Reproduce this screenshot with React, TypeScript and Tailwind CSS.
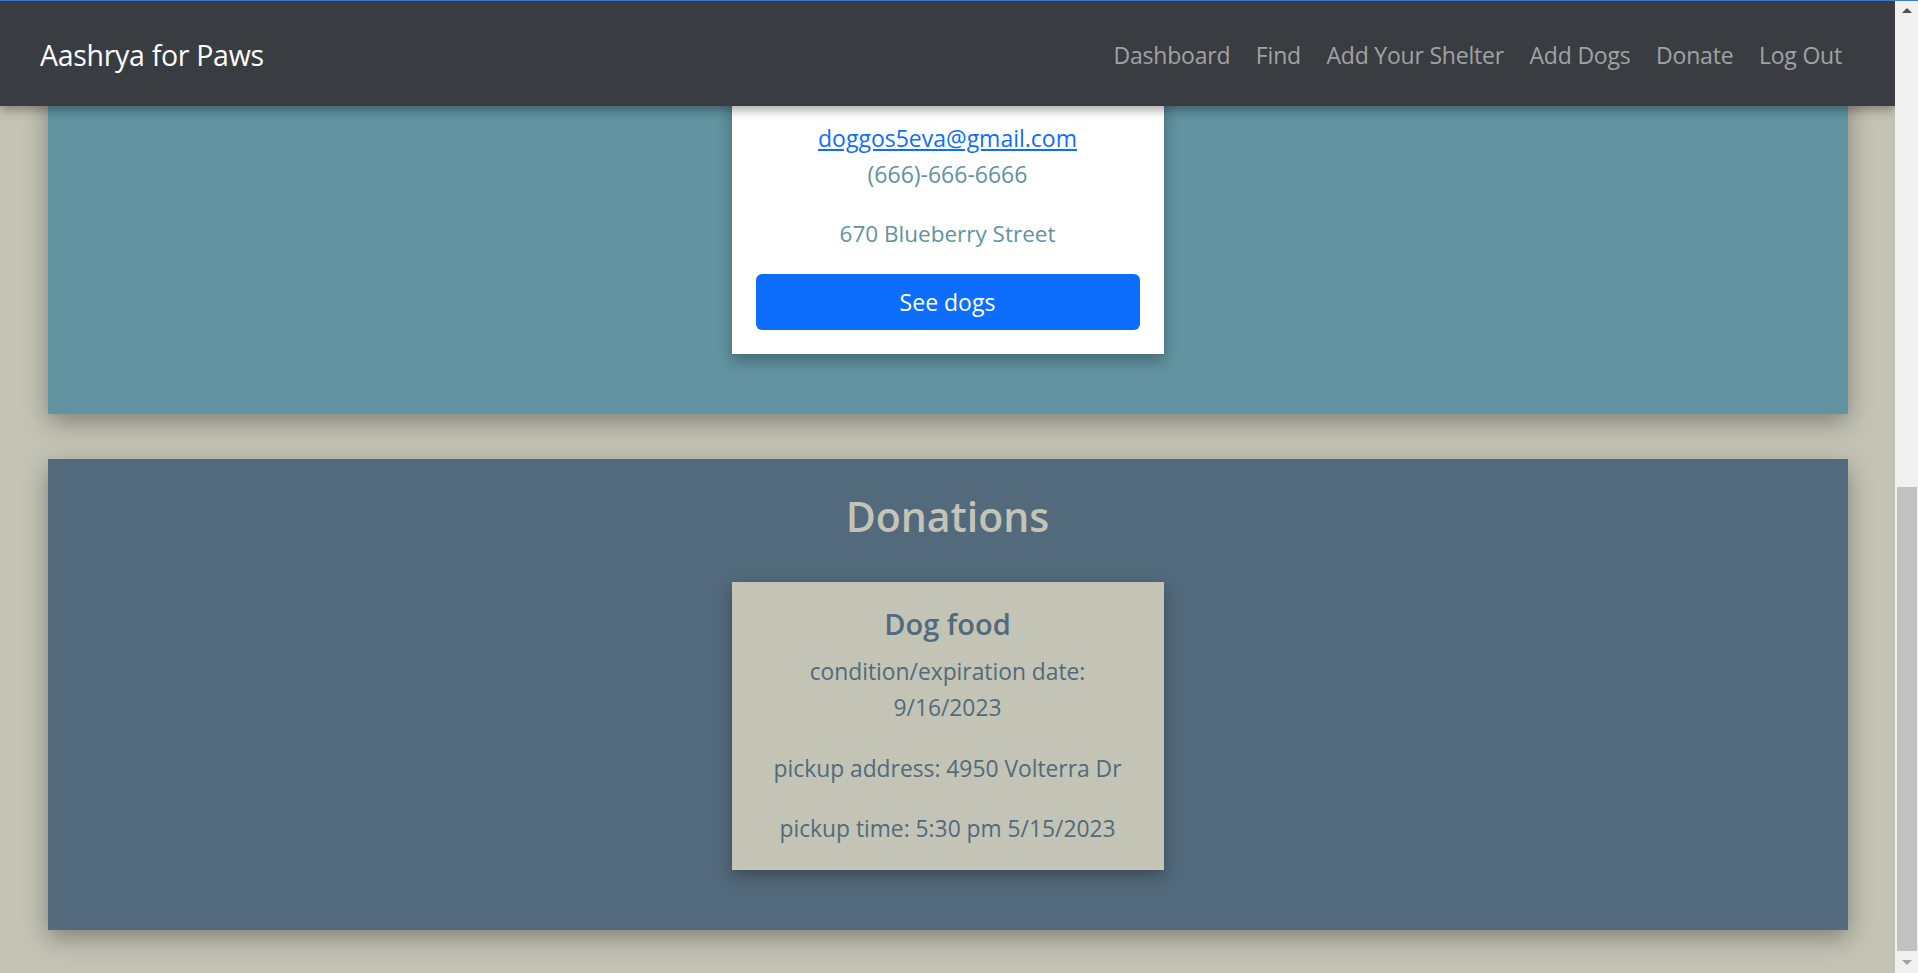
import React from "react";

const font = { fontFamily: '"Open Sans", "Noto Sans", sans-serif' };

function Scrollbar() {
  return (
    <div className="w-[23px] h-full bg-[#f0f0f0] flex flex-col items-center">
      <div className="h-[17px] w-full flex items-center justify-center pt-[4px]">
        <div className="w-0 h-0 border-l-[5px] border-r-[5px] border-b-[5px] border-l-transparent border-r-transparent border-b-[#505050]" />
      </div>
      <div className="flex-1 w-full flex flex-col justify-end">
        <div className="ml-[2px] w-[20px] h-[464px] bg-[#c1c1c1]" />
        <div className="h-[22px] w-full flex items-center justify-center">
          <div className="w-0 h-0 border-l-[5px] border-r-[5px] border-t-[5px] border-l-transparent border-r-transparent border-t-[#a3a3a3]" />
        </div>
      </div>
    </div>
  );
}

export default function App() {
  const links = ["Dashboard", "Find", "Add Your Shelter", "Add Dogs", "Donate", "Log Out"];
  return (
    <div className="relative w-[1918px] h-[973px] overflow-hidden bg-[#c4c4b6]" style={font}>
      <div className="absolute top-0 left-0 w-[1918px] h-px bg-[#3d78c6] z-30" />
      <div className="flex h-full">
        <div className="relative w-[1895px] h-full overflow-hidden">
          {/* navbar */}
          <nav className="absolute top-0 left-0 z-20 w-[1895px] h-[106px] bg-[#393d41] shadow-[0_4px_10px_rgba(0,0,0,0.35)] flex items-center justify-between pl-[40px] pr-[53px] pt-[4px]">
            <span className="text-white text-[28.5px] leading-none tracking-[-0.3px]">Aashrya for Paws</span>
            <ul className="flex items-center gap-[25.5px]">
              {links.map((l) => (
                <li key={l} className="text-[23px] leading-none text-[#a0a2a4] tracking-[-0.2px]">
                  {l}
                </li>
              ))}
            </ul>
          </nav>

          {/* content */}
          <div className="flex flex-col items-center">
            <section className="w-[1800px] h-[414px] bg-[#6193a0] shadow-[0_8px_24px_rgba(0,0,0,0.35)]">
              <div className="mx-auto w-[432px] h-[354px] bg-white shadow-[0_6px_14px_rgba(0,0,0,0.3)] pt-[120px] px-6 pb-6 flex flex-col items-center text-[23px] leading-[36px] text-[#6193a0]">
                <a href="#" className="text-[#0d6efd] underline">doggos5eva@gmail.com</a>
                <span>(666)-666-6666</span>
                <span className="mt-6 text-[22.5px]">670 Blueberry Street</span>
                <button className="mt-[22px] w-full h-[56px] rounded-[6px] bg-[#0d6efd] text-white text-[23px]">
                  See dogs
                </button>
              </div>
            </section>

            <section className="mt-[45px] w-[1800px] h-[471px] bg-[#536a7c] shadow-[0_8px_24px_rgba(0,0,0,0.35)] pt-[30px] flex flex-col items-center">
              <h1 className="text-[41px] leading-[54px] font-semibold text-[#c4c4b6]">Donations</h1>
              <div className="mt-[39px] w-[432px] h-[288px] bg-[#c4c4b6] shadow-[0_6px_14px_rgba(0,0,0,0.3)] pt-[24px] px-6 flex flex-col items-center text-center text-[#536a7c]">
                <h5 className="text-[29px] leading-[36px] font-semibold">Dog food</h5>
                <p className="mt-[12px] text-[22.8px] leading-[36px]">condition/expiration date: 9/16/2023</p>
                <p className="mt-[25px] text-[22.8px] leading-[36px]">pickup address: 4950 Volterra Dr</p>
                <p className="mt-[24px] text-[22.8px] leading-[36px]">pickup time: 5:30 pm 5/15/2023</p>
              </div>
            </section>
          </div>
        </div>
        <Scrollbar />
      </div>
    </div>
  );
}
